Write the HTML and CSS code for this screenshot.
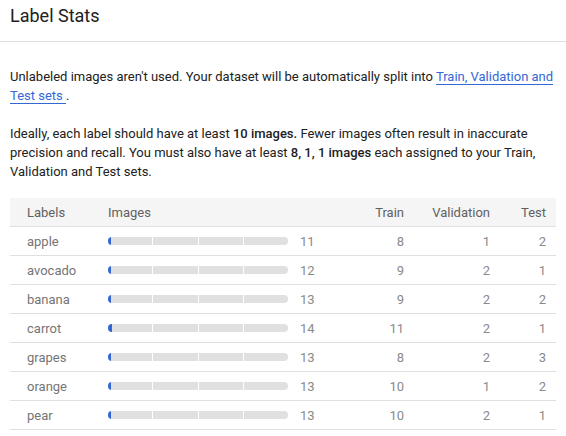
FILE: index.html
```html
<!DOCTYPE html>
<html>
<head>
<meta charset="utf-8">
<link rel="stylesheet" href="styles.css">
</head>
<body>
<div class="panel">
  <div class="header"><h1 class="title">Label Stats</h1></div>
  <div class="content">
    <p class="para first">Unlabeled images aren't used. Your dataset will be automatically split into <a class="link" href="#">Train, Validation and Test sets </a>.</p>
    <p class="para">Ideally, each label should have at least <b>10 images.</b> Fewer images often result in inaccurate precision and recall. You must also have at least <b>8, 1, 1 images</b> each assigned to your Train, Validation and Test sets.</p>
    <div class="table">
      <div class="row head">
        <div>Labels</div><div>Images</div><div></div><div class="r">Train</div><div class="r">Validation</div><div class="r">Test</div>
      </div>
      <div class="row">
        <div class="lbl">apple</div>
        <div class="barcell"><div class="bar"><span class="seg"></span><span class="seg"></span><span class="seg"></span><span class="seg"></span><span class="fill"></span></div></div>
        <div class="num">11</div><div class="r num">8</div><div class="r num">1</div><div class="r num">2</div>
      </div>
      <div class="row">
        <div class="lbl">avocado</div>
        <div class="barcell"><div class="bar"><span class="seg"></span><span class="seg"></span><span class="seg"></span><span class="seg"></span><span class="fill"></span></div></div>
        <div class="num">12</div><div class="r num">9</div><div class="r num">2</div><div class="r num">1</div>
      </div>
      <div class="row">
        <div class="lbl">banana</div>
        <div class="barcell"><div class="bar"><span class="seg"></span><span class="seg"></span><span class="seg"></span><span class="seg"></span><span class="fill"></span></div></div>
        <div class="num">13</div><div class="r num">9</div><div class="r num">2</div><div class="r num">2</div>
      </div>
      <div class="row">
        <div class="lbl">carrot</div>
        <div class="barcell"><div class="bar"><span class="seg"></span><span class="seg"></span><span class="seg"></span><span class="seg"></span><span class="fill wide"></span></div></div>
        <div class="num">14</div><div class="r num">11</div><div class="r num">2</div><div class="r num">1</div>
      </div>
      <div class="row">
        <div class="lbl">grapes</div>
        <div class="barcell"><div class="bar"><span class="seg"></span><span class="seg"></span><span class="seg"></span><span class="seg"></span><span class="fill"></span></div></div>
        <div class="num">13</div><div class="r num">8</div><div class="r num">2</div><div class="r num">3</div>
      </div>
      <div class="row">
        <div class="lbl">orange</div>
        <div class="barcell"><div class="bar"><span class="seg"></span><span class="seg"></span><span class="seg"></span><span class="seg"></span><span class="fill"></span></div></div>
        <div class="num">13</div><div class="r num">10</div><div class="r num">1</div><div class="r num">2</div>
      </div>
      <div class="row">
        <div class="lbl">pear</div>
        <div class="barcell"><div class="bar"><span class="seg"></span><span class="seg"></span><span class="seg"></span><span class="seg"></span><span class="fill"></span></div></div>
        <div class="num">13</div><div class="r num">10</div><div class="r num">2</div><div class="r num">1</div>
      </div>
    </div>
  </div>
</div>
</body>
</html>
```
FILE: styles.css
```css
html, body {
  margin: 0;
  padding: 0;
  background: #ffffff;
}
body {
  font-family: Roboto, "Liberation Sans", sans-serif;
  color: #212121;
  width: 566px;
}
.header {
  padding: 4px 10px 13px;
  border-bottom: 1px solid #e0e0e0;
}
.title {
  margin: 0;
  font-size: 18px;
  line-height: 24px;
  font-weight: 400;
  color: #212121;
}
.content {
  padding: 0 10px;
}
.para {
  margin: 19px 0 0;
  font-size: 13px;
  line-height: 19px;
  color: #212121;
}
.para.first {
  margin-top: 25px;
}
.para b {
  font-weight: 500;
}
.link {
  color: #3367d6;
  text-decoration: none;
  border-bottom: 1px solid #3367d6;
}
.table {
  margin-top: 17px;
  font-size: 13px;
}
.row {
  display: grid;
  grid-template-columns: 81px 192px 44px 1fr 86px 56px;
  align-items: center;
  height: 28px;
  padding: 0 10px 0 17px;
  border-bottom: 1px solid #e0e0e0;
  color: #757575;
}
.row.head {
  background: #f5f5f5;
  color: #616161;
}
.r {
  text-align: right;
}
.num {
  color: #8a8a8a;
}
.barcell {
  padding-right: 12px;
}
.bar {
  position: relative;
  display: flex;
  gap: 1px;
  height: 8px;
  width: 180px;
  border-radius: 4px;
  overflow: hidden;
}
.seg {
  flex: 1;
  background: #e0e0e0;
}
.fill {
  position: absolute;
  left: 0;
  top: 0;
  bottom: 0;
  width: 3px;
  background: #3367d6;
}
.fill.wide {
  width: 4px;
}
```
